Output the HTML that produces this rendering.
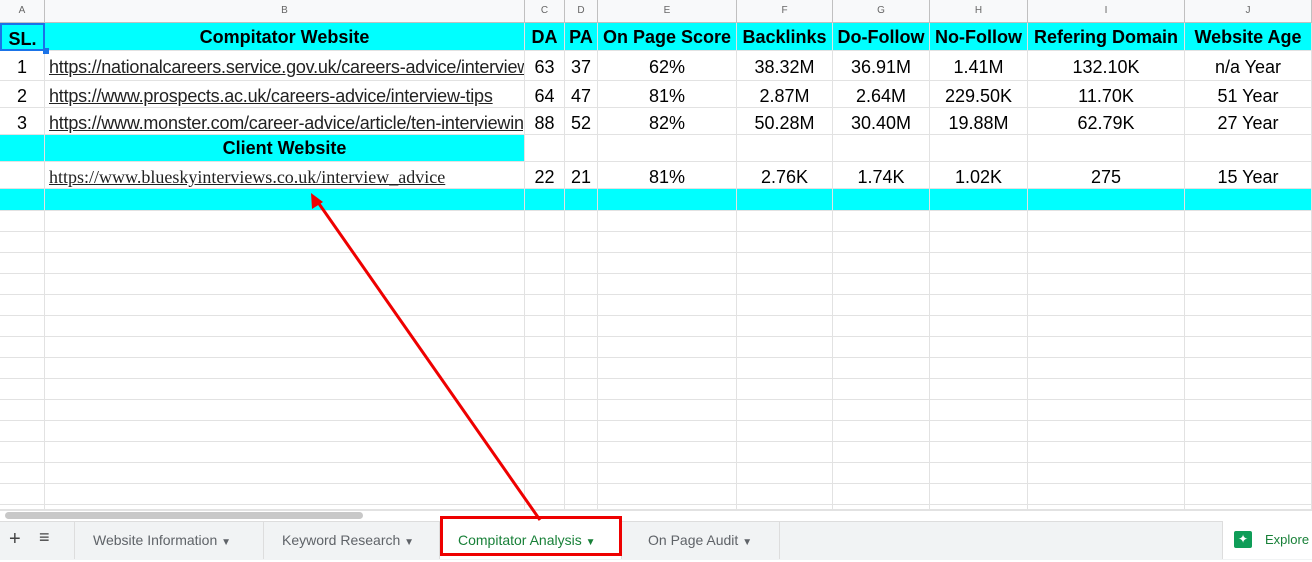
<!DOCTYPE html>
<html><head><style>
body{margin:0;width:1312px;height:559px;overflow:hidden;background:#fff;font-family:"Liberation Sans",Arial,sans-serif;position:relative}
.c{position:absolute;box-sizing:border-box;border-right:1px solid #e2e2e2;border-bottom:1px solid #e2e2e2;white-space:nowrap;overflow:hidden;font-size:18px;color:#000;text-align:center}
.h{background:#f8f9fa;color:#666;font-size:10px;border-color:#c0c0c0;line-height:22px}
.cy{background:#00ffff;font-weight:bold}
.l{text-align:left;padding-left:4px;text-decoration:underline;color:#222;letter-spacing:-0.22px}
.sf{font-family:"Liberation Serif",serif;font-size:18px;letter-spacing:0}
.tab{position:absolute;top:521px;height:38px;line-height:38px;font-size:14px;color:#5f6368;border-right:1px solid #ddd;padding:0 18px;box-sizing:border-box}
</style></head><body>
<div id="g"></div>
<script>
var cols=[[0,45,'A'],[45,525,'B'],[525,565,'C'],[565,598,'D'],[598,737,'E'],[737,833,'F'],[833,930,'G'],[930,1028,'H'],[1028,1185,'I'],[1185,1312,'J']];
var rows=[[23,51],[51,81],[81,108],[108,135],[135,162],[162,189],[189,211]];
for(var y=211;y<510;y+=21)rows.push([y,Math.min(y+21,510)]);
var data=[
['SL.','Compitator Website','DA','PA','On Page Score','Backlinks','Do-Follow','No-Follow','Refering Domain','Website Age'],
['1','https://nationalcareers.service.gov.uk/careers-advice/interview-advice','63','37','62%','38.32M','36.91M','1.41M','132.10K','n/a Year'],
['2','https://www.prospects.ac.uk/careers-advice/interview-tips','64','47','81%','2.87M','2.64M','229.50K','11.70K','51 Year'],
['3','https://www.monster.com/career-advice/article/ten-interviewing-rules','88','52','82%','50.28M','30.40M','19.88M','62.79K','27 Year'],
['','Client Website','','','','','','','',''],
['','https://www.blueskyinterviews.co.uk/interview_advice','22','21','81%','2.76K','1.74K','1.02K','275','15 Year']];
var h='';
cols.forEach(function(c){h+='<div class="c h" style="left:'+c[0]+'px;top:0;width:'+(c[1]-c[0])+'px;height:23px">'+c[2]+'</div>';});
rows.forEach(function(r,ri){cols.forEach(function(c,ci){
 var cls='c',t='',hh=r[1]-r[0],pt=(ri>=1&&ri<=5&&ri!=4)?3:0;
 var st='left:'+c[0]+'px;top:'+r[0]+'px;width:'+(c[1]-c[0])+'px;height:'+hh+'px;line-height:'+(hh-pt)+'px;padding-top:'+pt+'px;';
 if(ri<6)t=data[ri][ci];
 if(ri==0){cls+=' cy';}
 if(ri==4&&ci<2){cls+=' cy';}
 if(ri==6){cls+=' cy';}
 if(ci==1&&(ri>=1&&ri<=3||ri==5)){cls+=' l';}
 if(ri==5&&ci==1)cls+=' sf';
 if(ri==0&&ci==0)st+='border:2px solid #1a73e8;';
 h+='<div class="'+cls+'" style="'+st+'">'+t+'</div>';
});});
document.getElementById('g').innerHTML=h;
</script>
<div style="position:absolute;left:43px;top:48px;width:6px;height:6px;background:#1a73e8"></div>
<div style="position:absolute;left:0;top:510px;width:1312px;height:11px;background:#fff;border-top:1px solid #e2e2e2"></div>
<div style="position:absolute;left:5px;top:512px;width:358px;height:7px;background:#c8c8c8;border-radius:4px"></div>
<div style="position:absolute;left:0;top:521px;width:1312px;height:38px;background:#f1f3f4;border-top:1px solid #ddd"></div>
<div style="position:absolute;left:9px;top:528px;font-size:20px;color:#444">+</div>
<div style="position:absolute;left:39px;top:527px;font-size:18px;color:#444">≡</div>
<div class="tab" style="left:74px;width:190px;border-left:1px solid #ddd">Website Information <span style="font-size:10px">▼</span></div>
<div class="tab" style="left:264px;width:176px">Keyword Research <span style="font-size:10px">▼</span></div>
<div class="tab" style="left:440px;background:#fff;color:#188038;width:182px">Compitator Analysis <span style="font-size:10px">▼</span></div>
<div class="tab" style="left:630px;width:150px">On Page Audit <span style="font-size:10px">▼</span></div>
<div style="position:absolute;left:1222px;top:521px;width:90px;height:38px;background:#fff;border-left:1px solid #ddd"></div>
<div style="position:absolute;left:1234px;top:531px;width:18px;height:17px;background:#0f9d58;border-radius:2px;color:#fff;font-size:12px;text-align:center;line-height:17px">✦</div>
<div style="position:absolute;left:1265px;top:532px;font-size:13px;color:#188038">Explore</div>
<div style="position:absolute;left:440px;top:516px;width:182px;height:40px;border:3px solid #e00;box-sizing:border-box"></div>
<svg style="position:absolute;left:0;top:0" width="1312" height="559"><line x1="540" y1="520" x2="315" y2="198" stroke="#e00" stroke-width="3"/><polygon points="311,193 312,209 323,202" fill="#e00"/></svg>
</body></html>
